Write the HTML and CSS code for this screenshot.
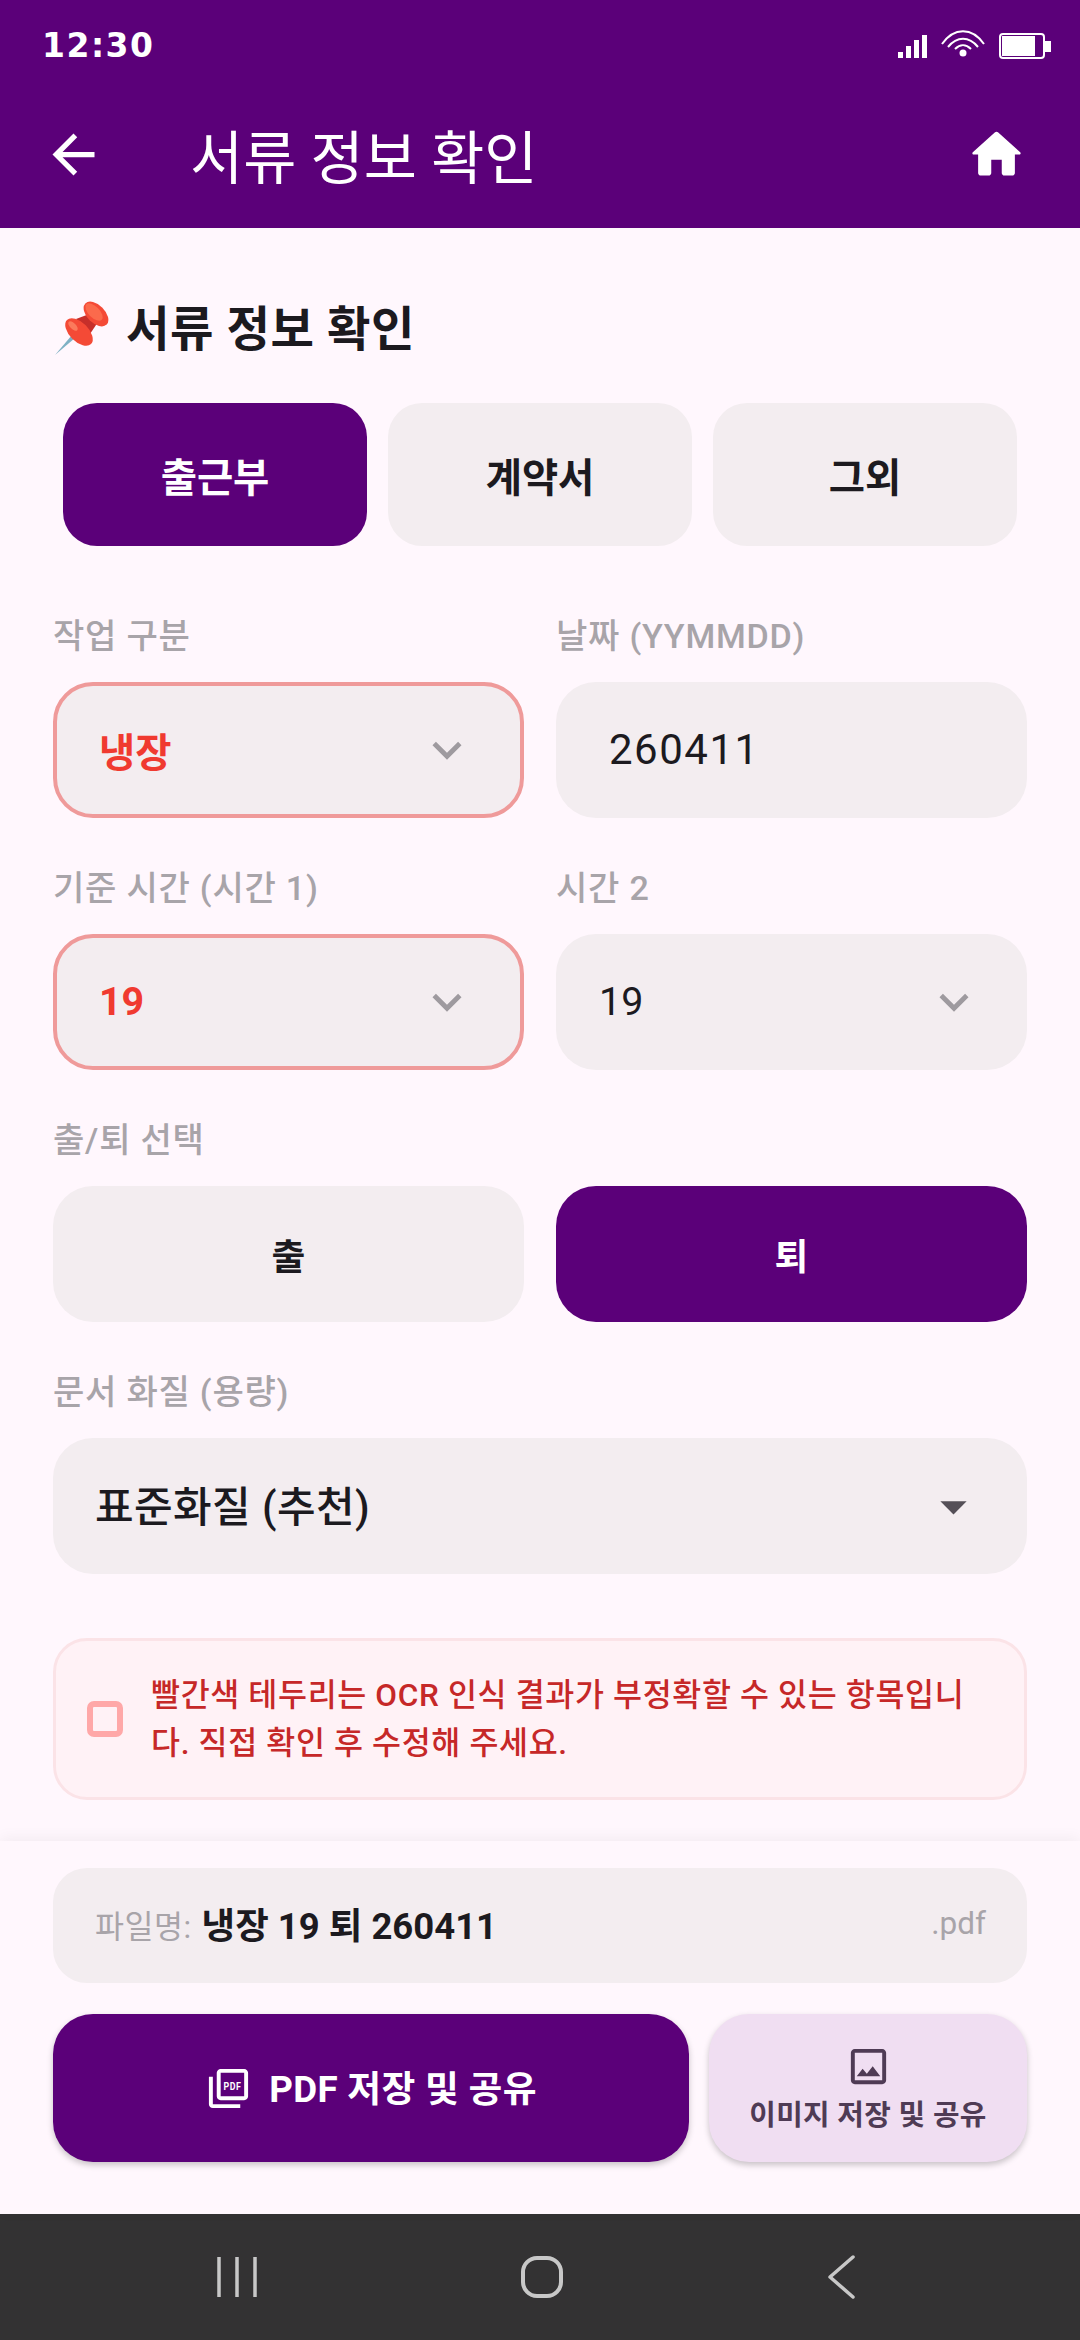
FILE: index.html
```html
<!DOCTYPE html>
<html lang="ko">
<head>
    <meta charset="UTF-8">
    <meta name="viewport" content="width=device-width, initial-scale=1.0">
    <title>서류 정보 확인</title>
    <link rel="stylesheet" href="styles.css">
</head>
<body>
    <div class="app">
        <header class="top">
            <div class="status">
                <span class="clock">12:30</span>
                <svg class="status-icons" width="153" height="36" viewBox="898 28 153 36">
                    <g fill="#fff">
                        <rect x="898" y="52" width="5" height="6"/>
                        <rect x="906" y="46" width="5" height="12"/>
                        <rect x="914" y="40" width="5" height="18"/>
                        <rect x="922" y="35" width="5" height="23"/>
                        <circle cx="963" cy="53" r="3.5"/>
                        <rect x="1002" y="36" width="33" height="20"/>
                        <rect x="1045" y="41" width="6" height="11"/>
                    </g>
                    <g fill="none" stroke="#fff" stroke-width="2">
                        <path d="M942 44c12-17 30-17 42 0"/>
                        <path d="M948 47c9-11 21-11 30 0"/>
                        <path d="M955 49c5-5 11-5 16 0"/>
                        <rect x="1000" y="34" width="44" height="24" rx="3"/>
                    </g>
                </svg>
            </div>
            <div class="appbar">
                <svg class="icon-63" viewBox="0 0 24 24" fill="#fff"><path d="M20 11H7.83l5.59-5.59L12 4l-8 8 8 8 1.41-1.41L7.83 13H20v-2z"/></svg>
                <h1>서류 정보 확인</h1>
                <svg class="icon-63" viewBox="0 0 24 24" fill="#fff"><path d="M10 19v-5h4v5c0 .55.45 1 1 1h3c.55 0 1-.45 1-1v-7h1.7c.46 0 .68-.57.33-.87L12.67 3.6c-.38-.34-.96-.34-1.34 0l-8.36 7.53c-.34.3-.13.87.33.87H5v7c0 .55.45 1 1 1h3c.55 0 1-.45 1-1z"/></svg>
            </div>
        </header>

        <main class="content">
            <h2 class="heading">
                <svg class="pin" width="60" height="60" viewBox="53 300 60 60">
                    <path d="M72 337l-17 20 20-17z" fill="#7fb1c4"/>
                    <path d="M76 321l16-6 6 9-10 15z" fill="#c62f2a"/>
                    <ellipse cx="79" cy="334" rx="17" ry="9.5" transform="rotate(45 79 334)" fill="#f44a36"/>
                    <ellipse cx="73" cy="328" rx="6" ry="3" transform="rotate(45 73 328)" fill="#fb7a5c"/>
                    <ellipse cx="96" cy="316" rx="15" ry="9" transform="rotate(45 96 316)" fill="#f44a36"/>
                    <ellipse cx="94" cy="314" rx="11" ry="5.5" transform="rotate(45 94 314)" fill="#fb6a4c"/>
                </svg>
                <span>서류 정보 확인</span>
            </h2>

            <div class="tabs">
                <div class="tab active">출근부</div>
                <div class="tab">계약서</div>
                <div class="tab">그외</div>
            </div>

            <div class="form">
                <div class="row">
                    <div class="group">
                        <div class="label">작업 구분</div>
                        <div class="field warn">
                            <span class="value strong">냉장</span>
                            <svg class="chevron" viewBox="0 0 24 24"><path d="M7.41 8.59L12 13.17l4.59-4.58L18 10l-6 6-6-6 1.41-1.41z"/></svg>
                        </div>
                    </div>
                    <div class="group">
                        <div class="label">날짜 (YYMMDD)</div>
                        <div class="field date"><span class="value big">260411</span></div>
                    </div>
                </div>
                <div class="row">
                    <div class="group">
                        <div class="label">기준 시간 (시간 1)</div>
                        <div class="field warn">
                            <span class="value strong">19</span>
                            <svg class="chevron" viewBox="0 0 24 24"><path d="M7.41 8.59L12 13.17l4.59-4.58L18 10l-6 6-6-6 1.41-1.41z"/></svg>
                        </div>
                    </div>
                    <div class="group">
                        <div class="label">시간 2</div>
                        <div class="field">
                            <span class="value">19</span>
                            <svg class="chevron" viewBox="0 0 24 24"><path d="M7.41 8.59L12 13.17l4.59-4.58L18 10l-6 6-6-6 1.41-1.41z"/></svg>
                        </div>
                    </div>
                </div>
                <div class="group">
                    <div class="label">출/퇴 선택</div>
                    <div class="row">
                        <div class="toggle">출</div>
                        <div class="toggle active">퇴</div>
                    </div>
                </div>
                <div class="group">
                    <div class="label">문서 화질 (용량)</div>
                    <div class="field quality">
                        <span class="value medium">표준화질 (추천)</span>
                        <svg class="dropdown" viewBox="0 0 24 24"><path d="M7 10l5 5 5-5z"/></svg>
                    </div>
                </div>
            </div>

            <div class="alert">
                <span class="alert-box"></span>
                <p>빨간색 테두리는 OCR 인식 결과가 부정확할 수 있는 항목입니<br>다. 직접 확인 후 수정해 주세요.</p>
            </div>
        </main>

        <section class="bottom">
            <div class="filename">
                <span class="file-label">파일명:</span>
                <span class="file-name">냉장 19 퇴 260411</span>
                <span class="file-ext">.pdf</span>
            </div>
            <div class="actions">
                <div class="btn-pdf">
                    <svg class="icon-47" viewBox="0 0 24 24" fill="#fff">
                        <path d="M20 2H8c-1.1 0-2 .9-2 2v12c0 1.1.9 2 2 2h12c1.1 0 2-.9 2-2V4c0-1.1-.9-2-2-2zm0 14H8V4h12v12zM4 6H2v14c0 1.1.9 2 2 2h14v-2H4V6z"/>
                        <text class="pdf-mark" x="14" y="12.6" text-anchor="middle" textLength="9" lengthAdjust="spacingAndGlyphs">PDF</text>
                    </svg>
                    <span class="btn-text">PDF 저장 및 공유</span>
                </div>
                <div class="btn-image">
                    <svg class="icon-47" viewBox="0 0 24 24" fill="#4f3b55"><path d="M19 5v14H5V5h14m0-2H5c-1.1 0-2 .9-2 2v14c0 1.1.9 2 2 2h14c1.1 0 2-.9 2-2V5c0-1.1-.9-2-2-2zm-4.86 8.86l-3 3.87L9 13.14 6 17h12l-3.86-5.14z"/></svg>
                    이미지 저장 및 공유
                </div>
            </div>
        </section>

        <nav class="navbar">
            <svg width="40" height="44" viewBox="0 0 40 44" fill="none" stroke="#c8c8c8" stroke-width="3.5"><path d="M2 2v40M20 2v40M38 2v40"/></svg>
            <svg width="44" height="44" viewBox="0 0 44 44" fill="none" stroke="#c8c8c8" stroke-width="4"><rect x="3" y="3" width="38" height="38" rx="14"/></svg>
            <svg width="30" height="44" viewBox="0 0 30 44" fill="none" stroke="#c8c8c8" stroke-width="3.5" stroke-linecap="round" stroke-linejoin="round"><path d="M26 2L3 22l23 20"/></svg>
        </nav>
    </div>
</body>
</html>
```

FILE: styles.css
```css
* {
    box-sizing: border-box;
}
body {
    margin: 0;
    background: #fff7fd;
    font-family: "Roboto", "Noto Sans CJK KR", sans-serif;
    color: #1c1a1f;
}
.app {
    display: flex;
    flex-direction: column;
    height: 2340px;
    overflow: hidden;
}
.top {
    background: #5b0079;
    color: #fff;
    height: 228px;
}
.status {
    height: 81px;
    padding: 10px 29px 0 42px;
    display: flex;
    justify-content: space-between;
    align-items: center;
}
.clock {
    font-family: "DejaVu Sans", sans-serif;
    font-weight: 700;
    font-size: 33px;
    letter-spacing: 1.5px;
}
.appbar {
    height: 147px;
    padding: 0 52px 0 42px;
    display: flex;
    align-items: center;
}
.appbar h1 {
    flex: 1;
    margin: 0 0 2px 85px;
    font-size: 57.75px;
    font-weight: 400;
}
.icon-63 {
    width: 63px;
    height: 63px;
}
.content {
    flex: 1;
    padding: 67px 53px 0;
}
.heading {
    margin: 0 0 48px;
    height: 60px;
    display: flex;
    align-items: center;
    gap: 13px;
    font-size: 47.25px;
    font-weight: 700;
    letter-spacing: 0.6px;
}
.pin {
    margin-top: 6px;
    flex: none;
}
.tabs {
    display: grid;
    grid-template-columns: repeat(3, 1fr);
    gap: 21px;
    padding: 0 10px;
    margin-bottom: 70px;
}
.tab {
    height: 143px;
    border-radius: 34px;
    background: #f3edf0;
    display: flex;
    justify-content: center;
    align-items: center;
    font-size: 39.4px;
    font-weight: 700;
}
.tab.active,
.toggle.active {
    background: #5b0079;
    color: #fff;
}
.form {
    display: flex;
    flex-direction: column;
    gap: 50px;
}
.row {
    display: grid;
    grid-template-columns: 1fr 1fr;
    gap: 32px;
}
.group {
    display: flex;
    flex-direction: column;
    gap: 26px;
}
.label {
    height: 40px;
    line-height: 40px;
    font-size: 34.1px;
    font-weight: 500;
    letter-spacing: 0.75px;
    color: #a8a4a9;
}
.field {
    height: 136px;
    border-radius: 40px;
    background: #f3edf0;
    padding: 0 44px 0 43px;
    display: flex;
    justify-content: space-between;
    align-items: center;
}
.field.warn {
    border: 4px solid #ef9a9a;
    padding: 0 44px 0 42px;
}
.field.date {
    padding: 0 53px;
}
.value {
    font-size: 39.4px;
    padding-bottom: 2px;
}
.value.strong {
    font-weight: 700;
    color: #f03a30;
}
.value.big {
    font-size: 42px;
    letter-spacing: 1.5px;
}
.value.medium {
    font-size: 42px;
    font-weight: 500;
    letter-spacing: 0.4px;
    padding-bottom: 5px;
}
.chevron {
    width: 58px;
    height: 58px;
    fill: #9e9a9f;
}
.dropdown {
    width: 63px;
    height: 63px;
    fill: #544f57;
}
.field.quality {
    padding: 0 42px;
}
.toggle {
    height: 136px;
    border-radius: 40px;
    background: #f3edf0;
    display: flex;
    justify-content: center;
    align-items: center;
    font-size: 36.75px;
    font-weight: 700;
}
.alert {
    margin-top: 64px;
    height: 162px;
    border: 3px solid #fbe3e7;
    border-radius: 34px;
    background: #fff2f6;
    padding: 0 31px;
    display: flex;
    align-items: center;
    gap: 28px;
}
.alert-box {
    flex: none;
    width: 36px;
    height: 36px;
    border: 6px solid #ffa8a8;
    border-radius: 7px;
}
.alert p {
    margin: 2px 0 0;
    font-size: 31.5px;
    font-weight: 500;
    line-height: 48px;
    letter-spacing: 0.65px;
    color: #c62828;
}
.bottom {
    height: 373px;
    padding: 27px 53px 0;
    background: #fff7fd;
    box-shadow: 0 -3px 14px rgba(0, 0, 0, 0.05);
    position: relative;
}
.filename {
    height: 115px;
    border-radius: 34px;
    background: #f3edf0;
    padding: 0 41px 4px 42px;
    display: flex;
    align-items: center;
    gap: 10px;
}
.file-label {
    font-size: 31.5px;
    letter-spacing: 0.5px;
    color: #a8a4a9;
}
.file-name {
    flex: 1;
    font-size: 36.5px;
    font-weight: 700;
}
.file-ext {
    font-size: 31.5px;
    color: #a8a4a9;
}
.actions {
    margin-top: 31px;
    display: grid;
    grid-template-columns: 2fr 1fr;
    gap: 20px;
}
.btn-pdf,
.btn-image {
    height: 148px;
    border-radius: 40px;
    box-shadow: 0 3px 6px rgba(0, 0, 0, 0.22);
    display: flex;
    justify-content: center;
    align-items: center;
}
.btn-pdf {
    gap: 17px;
    background: #5b0079;
    color: #fff;
    font-size: 36.75px;
    font-weight: 700;
    letter-spacing: 0.3px;
}
.btn-text {
    padding-bottom: 4px;
}
.btn-image {
    flex-direction: column;
    gap: 1px;
    background: #f0def2;
    color: #4f3b55;
    font-size: 28.9px;
    font-weight: 700;
    letter-spacing: 0.3px;
}
.icon-47 {
    width: 47px;
    height: 47px;
}
.pdf-mark {
    font-family: "Roboto", sans-serif;
    font-size: 6px;
    font-weight: 700;
}
.navbar {
    height: 126px;
    background: #333233;
    padding: 0 223px 0 217px;
    display: flex;
    justify-content: space-between;
    align-items: center;
}
```
